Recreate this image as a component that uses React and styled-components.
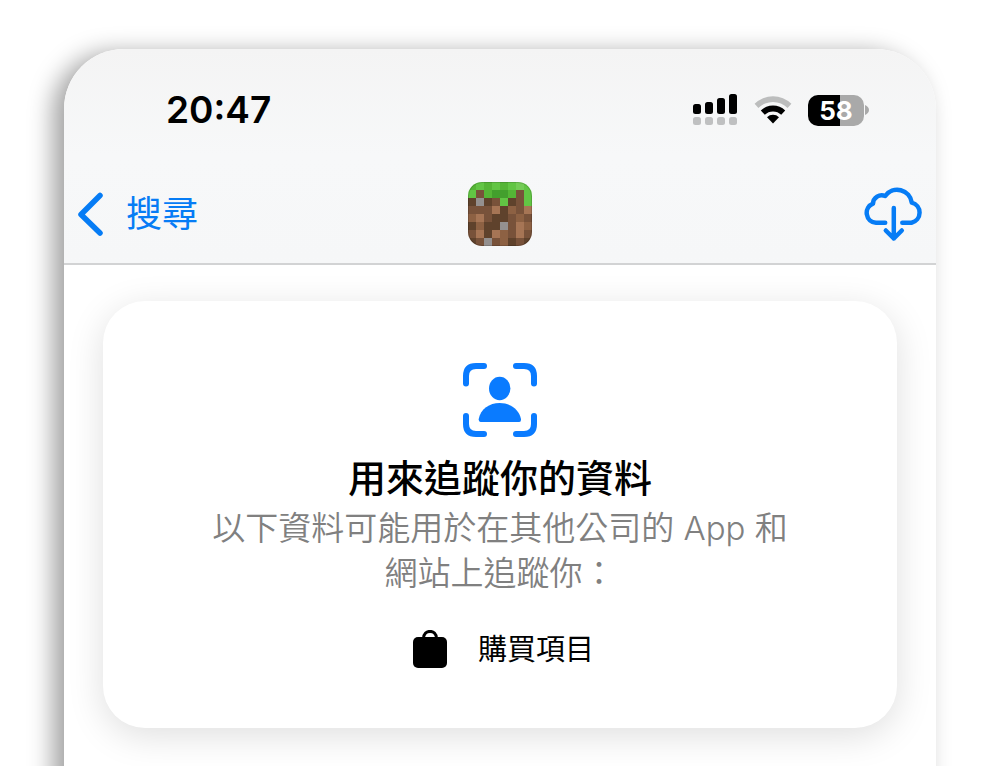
import React from 'react';
import styled, { createGlobalStyle } from 'styled-components';

const Global = createGlobalStyle`
  * { box-sizing: border-box; }
  body {
    margin: 0;
    background: #fff;
    color: #000;
    overflow: hidden;
    font-family: Inter, "Noto Sans CJK TC", sans-serif;
  }
`;

const Page = styled.div`
  min-height: 100vh;
  padding: 49px 64px 0;
  display: flex;
  overflow: hidden;
`;

/* The phone runs on past the bottom edge, so its shadow never closes there. */
const Phone = styled.div`
  flex: 1;
  min-width: 0;
  margin-bottom: -40px;
  background: #fff;
  border-radius: 60px 60px 0 0;
  box-shadow: -11px 4px 24px rgba(0, 0, 0, 0.37);
`;

const Header = styled.header`
  border-radius: 60px 60px 0 0;
  border-bottom: 2px solid #d2d3d4;
  background: linear-gradient(#f4f4f4, #f7f8f9 50%, #f6f7f8);
`;

const StatusBar = styled.div`
  display: flex;
  align-items: center;
  justify-content: space-between;
  padding: 36px 67px 0 102px;
`;

const Time = styled.time`
  font-size: 37px;
  line-height: 50px;
  font-weight: 600;
`;

const Indicators = styled.div`
  display: flex;
  align-items: center;
  gap: 16px;
`;

const Battery = styled.div`
  display: flex;
  align-items: center;
  gap: 1px;
`;

const BatteryBody = styled.div`
  width: 56px;
  height: 31px;
  border-radius: 10px;
  background: linear-gradient(90deg, #000 58%, #a9a9a9 58%);
  color: #fff;
  font-size: 26px;
  line-height: 31px;
  font-weight: 700;
  text-align: center;
`;

const Nav = styled.nav`
  display: grid;
  grid-template-columns: 1fr auto 1fr;
  align-items: center;
  padding: 47px 12px 17px;
`;

const BackLink = styled.a`
  display: flex;
  align-items: center;
  gap: 20px;
  color: #067cf5;
  font-size: 36px;
  line-height: 64px;
  text-decoration: none;
`;

const DownloadButton = styled.button`
  justify-self: end;
  display: flex;
  padding: 0;
  border: 0;
  background: none;
  color: #067cf5;
`;

const Card = styled.section`
  margin: 36px 39px 38px;
  padding: 61px 80px 56px;
  border-radius: 42px;
  background: #fff;
  box-shadow: 0 8px 36px rgba(0, 0, 0, 0.13);
  display: flex;
  flex-direction: column;
  align-items: center;
  text-align: center;
`;

const Title = styled.h1`
  margin: 12px 0 0;
  font-size: 38px;
  line-height: 56px;
  font-weight: 500;
`;

const Description = styled.p`
  margin: 0;
  max-width: 600px;
  color: #808080;
  font-size: 33px;
  line-height: 45px;
  font-weight: 350;
`;

const DataList = styled.ul`
  list-style: none;
  margin: 32px 0 0;
  padding: 0 0 0 6px;
`;

const DataItem = styled.li`
  display: flex;
  align-items: center;
  gap: 30px;
  font-size: 29px;
  line-height: 44px;
`;

const SignalIcon = () => (
  <svg width="46" height="32" viewBox="0 0 46 32" aria-hidden="true">
    {[[10, 10], [8, 12], [4, 16], [0, 20]].map(([y, h], i) => (
      <g key={i}>
        <rect x={1 + i * 12} y={y} width="8" height={h} rx="2.5" />
        <rect x={1 + i * 12} y="23" width="8" height="8" rx="2.5" fill="#bfc0c1" />
      </g>
    ))}
  </svg>
);

const WifiIcon = () => (
  <svg width="38" height="30" viewBox="0 0 38 30" aria-hidden="true">
    <path d="M0.6 8.800a26 26 0 0 1 36.800 0l-3.800 4.200a20.500 20.500 0 0 0-29.200 0z" fill="#bcbdbd" />
    <path d="M6.800 15.600a17.300 17.300 0 0 1 24.400 0l-4 4.200a11.700 11.700 0 0 0-16.400 0z" />
    <path d="M13 22.200a8.600 8.600 0 0 1 12 0L19 28.600z" />
  </svg>
);

const BatteryCap = () => (
  <svg width="4" height="10" viewBox="0 0 4 10" aria-hidden="true">
    <path d="M0 0q4 2 4 5t-4 5z" fill="#a9a9a9" />
  </svg>
);

const BackIcon = () => (
  <svg width="30" height="44" viewBox="0 0 30 44" fill="none" aria-hidden="true">
    <path d="M24 3.500L5 22.500l19 18.500" stroke="currentColor" strokeWidth="5.500" strokeLinecap="round" strokeLinejoin="round" />
  </svg>
);

const CloudIcon = () => (
  <svg
    width="60" height="56" viewBox="0 0 60 56" fill="none" stroke="currentColor"
    strokeWidth="4.500" strokeLinecap="round" strokeLinejoin="round" aria-hidden="true"
  >
    <path d="M21.200 36.800H12A9.900 9.900 0 0 1 9 17.700A8.700 8.700 0 0 1 21.200 10A14.700 14.700 0 0 1 47.800 16.600A10.400 10.400 0 0 1 47.500 36.800H38.300" />
    <path d="M29.800 22V52.500M21.800 44.500l8 8 8-8" />
  </svg>
);

const TrackingIcon = () => (
  <svg width="76" height="76" viewBox="0 0 76 76" aria-hidden="true">
    <g fill="none" stroke="#0a7bff" strokeWidth="6" strokeLinecap="round">
      <path d="M4 21.500V14Q4 4 14 4h8M54 4h8q10 0 10 10v7.500M72 54v8q0 10-10 10h-8M22 72h-8Q4 72 4 62v-8" />
    </g>
    <g fill="#0a7bff">
      <ellipse cx="37.700" cy="26.500" rx="10.700" ry="11.700" />
      <path d="M18.500 60q-2-.3-1.800-3C18.500 47 27.500 41 37.700 41S57 47 59 57q.3 2.700-1.800 3z" />
    </g>
  </svg>
);

const BagIcon = () => (
  <svg width="36" height="40" viewBox="0 0 36 40" aria-hidden="true">
    <rect x="1" y="7" width="34" height="31" rx="5" />
    <path d="M11.500 8.500C11.500 -1 24.500 -1 24.500 8.500" fill="none" stroke="#000" strokeWidth="3" />
  </svg>
);

const BLOCK_COLORS = {
  a: '#62c544', b: '#55b536', c: '#439f2d', d: '#74cc56',
  k: '#5f422c', m: '#78523a', n: '#8d6143', l: '#a67555', g: '#94908f',
};

const BLOCK_ROWS = [
  'bababada',
  'ambccbma',
  'kgkmakma',
  'mmmlknml',
  'nlmkkmnm',
  'knkkgmln',
  'mlklnmlm',
  'kmgmnkmk',
];

const GrassBlockIcon = () => (
  <svg width="64" height="64" viewBox="0 0 64 64" role="img" aria-label="Minecraft">
    <defs>
      <clipPath id="block-shape"><rect width="64" height="64" rx="14" /></clipPath>
    </defs>
    <g clipPath="url(#block-shape)" shapeRendering="crispEdges">
      {BLOCK_ROWS.map((row, y) =>
        [...row].map((key, x) => (
          <rect key={`${x}-${y}`} x={x * 8} y={y * 8} width="8" height="8" fill={BLOCK_COLORS[key]} />
        ))
      )}
    </g>
    <rect x="0.500" y="0.500" width="63" height="63" rx="13.500" fill="none" stroke="#000" strokeOpacity="0.15" />
  </svg>
);

export default function App() {
  return (
    <Page>
      <Global />
      <Phone>
        <Header>
          <StatusBar>
            <Time>20:47</Time>
            <Indicators>
              <SignalIcon />
              <WifiIcon />
              <Battery>
                <BatteryBody>58</BatteryBody>
                <BatteryCap />
              </Battery>
            </Indicators>
          </StatusBar>
          <Nav>
            <BackLink href="#search">
              <BackIcon />
              搜尋
            </BackLink>
            <GrassBlockIcon />
            <DownloadButton type="button" aria-label="下載">
              <CloudIcon />
            </DownloadButton>
          </Nav>
        </Header>
        <main>
          <Card>
            <TrackingIcon />
            <Title>用來追蹤你的資料</Title>
            <Description>以下資料可能用於在其他公司的 App 和網站上追蹤你：</Description>
            <DataList>
              <DataItem>
                <BagIcon />
                購買項目
              </DataItem>
            </DataList>
          </Card>
        </main>
      </Phone>
    </Page>
  );
}
